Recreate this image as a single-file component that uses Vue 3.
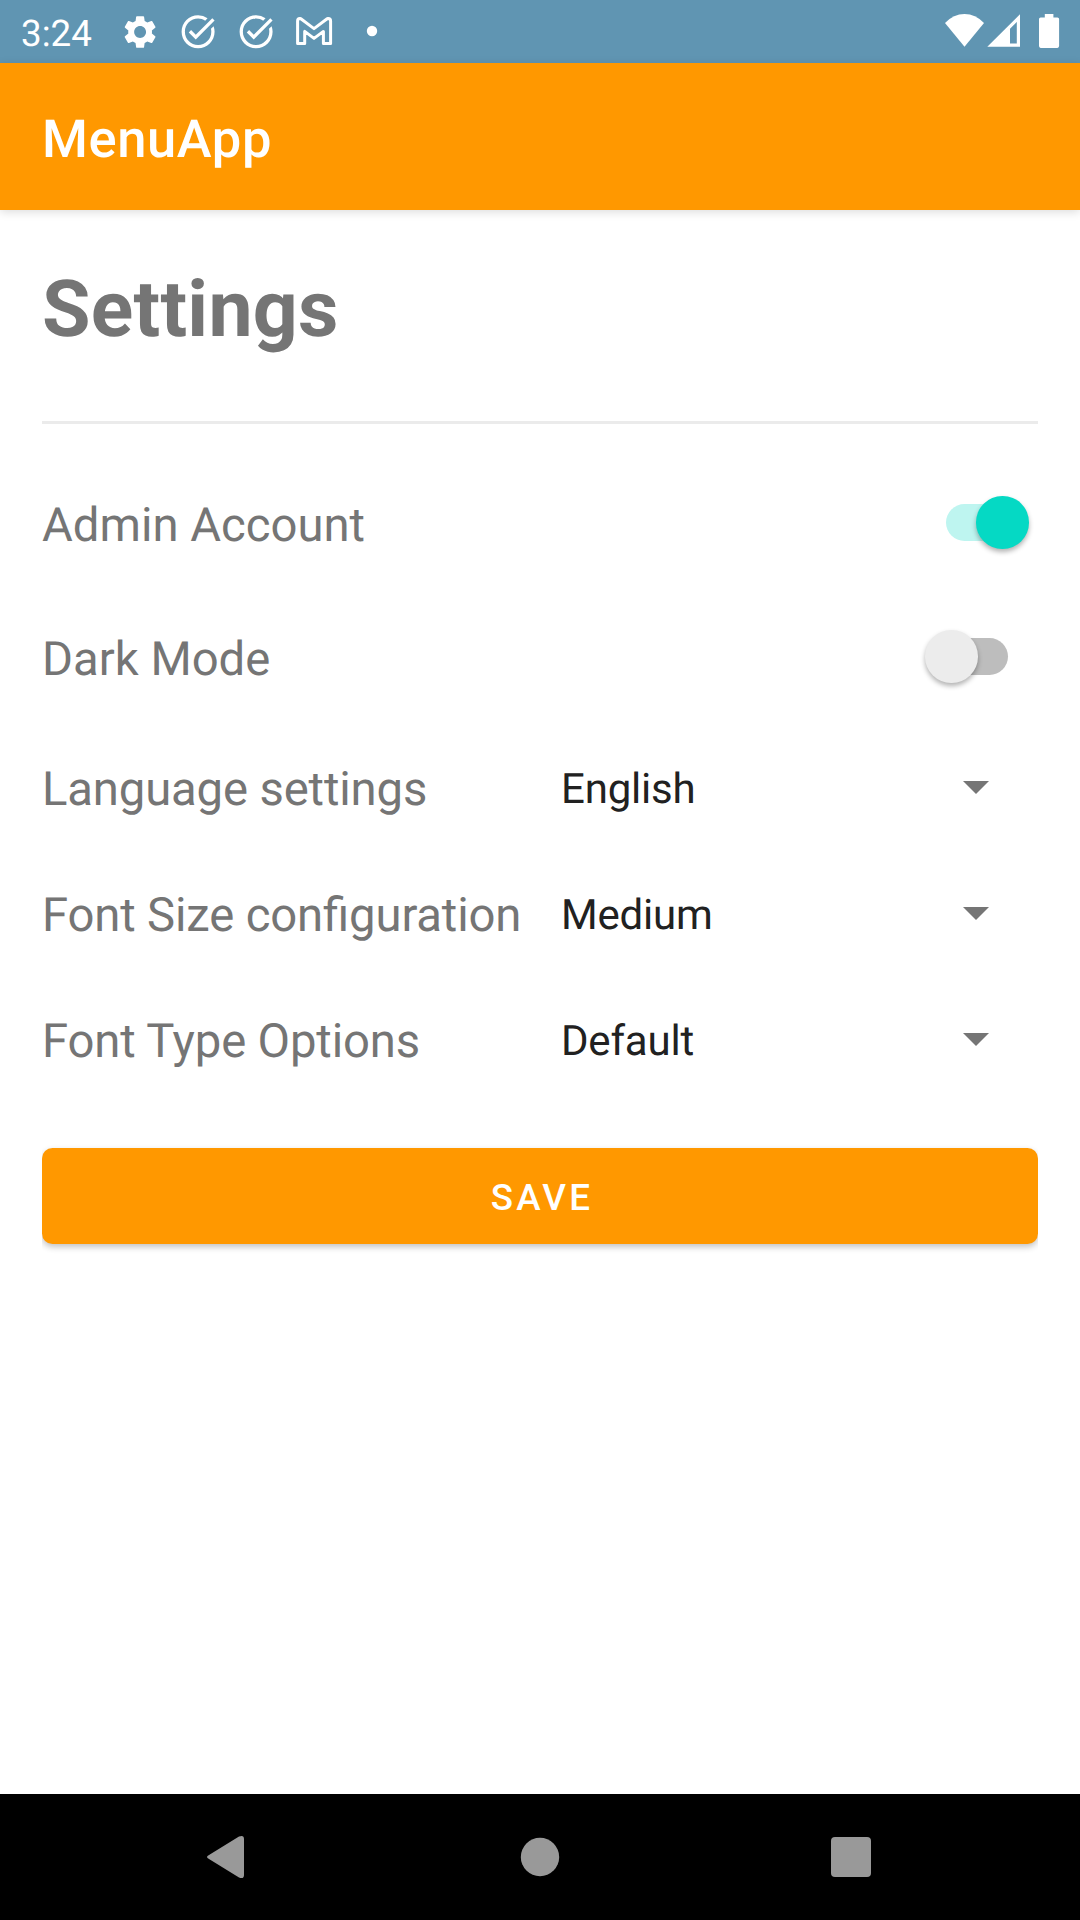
<script setup>
import { ref } from 'vue'

const toggles = ref([
  { label: 'Admin Account', on: true },
  { label: 'Dark Mode', on: false },
])

const selects = [
  { label: 'Language settings', value: 'English' },
  { label: 'Font Size configuration', value: 'Medium' },
  { label: 'Font Type Options', value: 'Default' },
]
</script>

<template>
  <div class="screen">
    <header class="status">
      <span class="time">3:24</span>
      <svg class="notifications" width="260" height="63" viewBox="0 0 260 63" fill="#fff">
        <g transform="translate(0.3 12.2) scale(1.65)">
          <path d="M19.14 12.94c.04-.3.06-.61.06-.94 0-.32-.02-.64-.07-.94l2.03-1.58a.49.49 0 0 0 .12-.61l-1.92-3.32a.488.488 0 0 0-.59-.22l-2.39.96c-.5-.38-1.03-.7-1.62-.94l-.36-2.54a.484.484 0 0 0-.48-.41h-3.84c-.24 0-.43.17-.47.41l-.36 2.54c-.59.24-1.13.57-1.62.94l-2.39-.96c-.22-.08-.47 0-.59.22L2.74 8.87c-.12.21-.08.47.12.61l2.03 1.58c-.05.3-.09.63-.09.94s.02.64.07.94l-2.03 1.58a.49.49 0 0 0-.12.61l1.92 3.32c.12.22.37.29.59.22l2.39-.96c.5.38 1.03.7 1.62.94l.36 2.54c.05.24.24.41.48.41h3.84c.24 0 .44-.17.47-.41l.36-2.54c.59-.24 1.13-.56 1.62-.94l2.39.96c.22.08.47 0 .59-.22l1.92-3.32c.12-.22.07-.47-.12-.61l-2.01-1.58zM12 15.6c-1.98 0-3.6-1.62-3.6-3.6s1.62-3.6 3.6-3.6 3.6 1.62 3.6 3.6-1.62 3.6-3.6 3.6z" />
        </g>
        <g v-for="x in [58.3, 116.3]" :key="x" :transform="`translate(${x} 12) scale(1.65)`">
          <path d="M22 5.18 10.59 16.6l-4.24-4.24 1.41-1.41 2.83 2.83 10-10L22 5.18zM19.79 10.22c.13.57.21 1.17.21 1.78 0 4.42-3.58 8-8 8s-8-3.58-8-8 3.58-8 8-8c1.58 0 3.04.46 4.28 1.25l1.44-1.44A9.9 9.9 0 0 0 12 2C6.48 2 2 6.48 2 12s4.48 10 10 10 10-4.48 10-10c0-1.19-.22-2.33-.6-3.39l-1.61 1.61z" />
        </g>
        <path
          d="M177.6 43.6V21Q177.6 18.4 179.8 18.4L181.2 19L194 28.6L206.8 19L208.2 18.4Q210.6 18.4 210.6 21V43.6H203.4V31.4L194 38.4L184.7 31.4V43.6Z"
          fill="none" stroke="#fff" stroke-width="3" stroke-linejoin="round"
        />
        <circle cx="252" cy="31" r="5.2" />
      </svg>
      <svg class="system" width="120" height="63" viewBox="0 0 120 63" fill="#fff">
        <path d="M24.5 46.7L5 23Q13.5 14 24.5 14T44 23Z" />
        <path fill-rule="evenodd" d="M47.3 46.8L80 14.2V46.8ZM70 28.7V43.4H76.8V22Z" />
        <path d="M104.8 14h8.6v3.4h4q1.7 0 1.7 1.7v27q0 1.8-1.7 1.8h-16.7q-1.7 0-1.7-1.8v-27q0-1.7 1.7-1.7h4.1z" />
      </svg>
    </header>

    <div class="appbar">MenuApp</div>

    <main class="content">
      <h1>Settings</h1>
      <div class="divider"></div>

      <div v-for="t in toggles" :key="t.label" class="row toggle-row">
        <span class="label">{{ t.label }}</span>
        <button class="switch" :class="{ on: t.on }" role="switch" :aria-checked="t.on" :aria-label="t.label" @click="t.on = !t.on">
          <span class="thumb"></span>
        </button>
      </div>

      <div v-for="s in selects" :key="s.label" class="row select-row">
        <span class="label">{{ s.label }}</span>
        <span class="value">{{ s.value }}</span>
        <svg class="caret" width="26" height="13" viewBox="0 0 26 13"><path d="M0 0H26L13 13Z" fill="#757575" /></svg>
      </div>

      <div class="save-wrap"><button class="save">SAVE</button></div>
    </main>

    <nav class="navbar">
      <svg width="1080" height="126" viewBox="0 0 1080 126" fill="#999">
        <path d="M209 61L239 42.5Q244 40.5 244 45V81Q244 85.5 239 83.5L209 65Q205 63 209 61Z" />
        <circle cx="540" cy="63" r="19.2" />
        <rect x="831" y="43" width="40" height="40" rx="4" />
      </svg>
    </nav>
  </div>
</template>

<style>
body {
  margin: 0;
}
</style>

<style scoped>
.screen {
  width: 1080px;
  height: 1920px;
  display: flex;
  flex-direction: column;
  background: #fff;
  font-family: Roboto, "Liberation Sans", sans-serif;
  text-rendering: geometricPrecision;
  overflow: hidden;
}

.status {
  flex: none;
  height: 63px;
  display: flex;
  background: #6095b2;
}

.time {
  width: 99px;
  padding-left: 21px;
  font-size: 36.75px;
  line-height: 67px;
  color: #fff;
}

.system {
  margin-left: auto;
  margin-right: 20px;
}

.appbar {
  flex: none;
  height: 147px;
  box-sizing: border-box;
  padding: 5px 42px 0;
  line-height: 142px;
  font-size: 52.5px;
  font-weight: 500;
  letter-spacing: 0.6px;
  color: #fff;
  background: #ff9800;
  box-shadow: 0 2px 9px rgba(0, 0, 0, 0.14);
}

.content {
  flex: 1;
  padding: 0 42px;
}

h1 {
  margin: 0 0 11px;
  font-size: 78.75px;
  line-height: 200px;
  font-weight: 700;
  letter-spacing: 0.25px;
  color: #757575;
}

.divider {
  height: 3px;
  margin-bottom: 34px;
  background: #ebebeb;
}

.row {
  display: flex;
  align-items: center;
}

.toggle-row {
  height: 134px;
  justify-content: space-between;
}

.select-row {
  height: 126px;
}

.label {
  font-size: 47.25px;
  color: #757575;
  white-space: nowrap;
}

.select-row .label {
  width: 519px;
  letter-spacing: -0.15px;
  font-feature-settings: "liga" 1;
}

.value {
  flex: 1;
  font-size: 42px;
  letter-spacing: -0.2px;
  color: #212121;
}

.caret {
  margin-right: 49.5px;
  margin-bottom: 3px;
}

.switch {
  position: relative;
  width: 73px;
  height: 37px;
  margin: 0 30px 5px 0;
  padding: 0;
  border: 0;
  border-radius: 19px;
  background: #bdbdbd;
}

.switch.on {
  margin-right: 19px;
  background: #bef5f0;
}

.thumb {
  position: absolute;
  top: -8px;
  left: -10px;
  width: 52.5px;
  height: 52.5px;
  border-radius: 50%;
  background: #ececec;
  box-shadow: 0 3px 5px rgba(0, 0, 0, 0.3);
}

.switch.on .thumb {
  left: 30px;
  background: #05d9c4;
}

.save-wrap {
  margin-top: 36px;
  padding: 8px 0 14px;
  overflow: hidden;
}

.save {
  display: block;
  width: 100%;
  height: 96px;
  padding: 3px 0 0 4px;
  border: 0;
  border-radius: 10.5px;
  background: #ff9800;
  box-shadow: 0 3px 6px rgba(0, 0, 0, 0.24);
  font-family: inherit;
  font-size: 36.75px;
  font-weight: 500;
  letter-spacing: 3.28px;
  color: #fff;
}

.navbar {
  flex: none;
  height: 126px;
  background: #000;
}

.navbar svg {
  display: block;
}
</style>
